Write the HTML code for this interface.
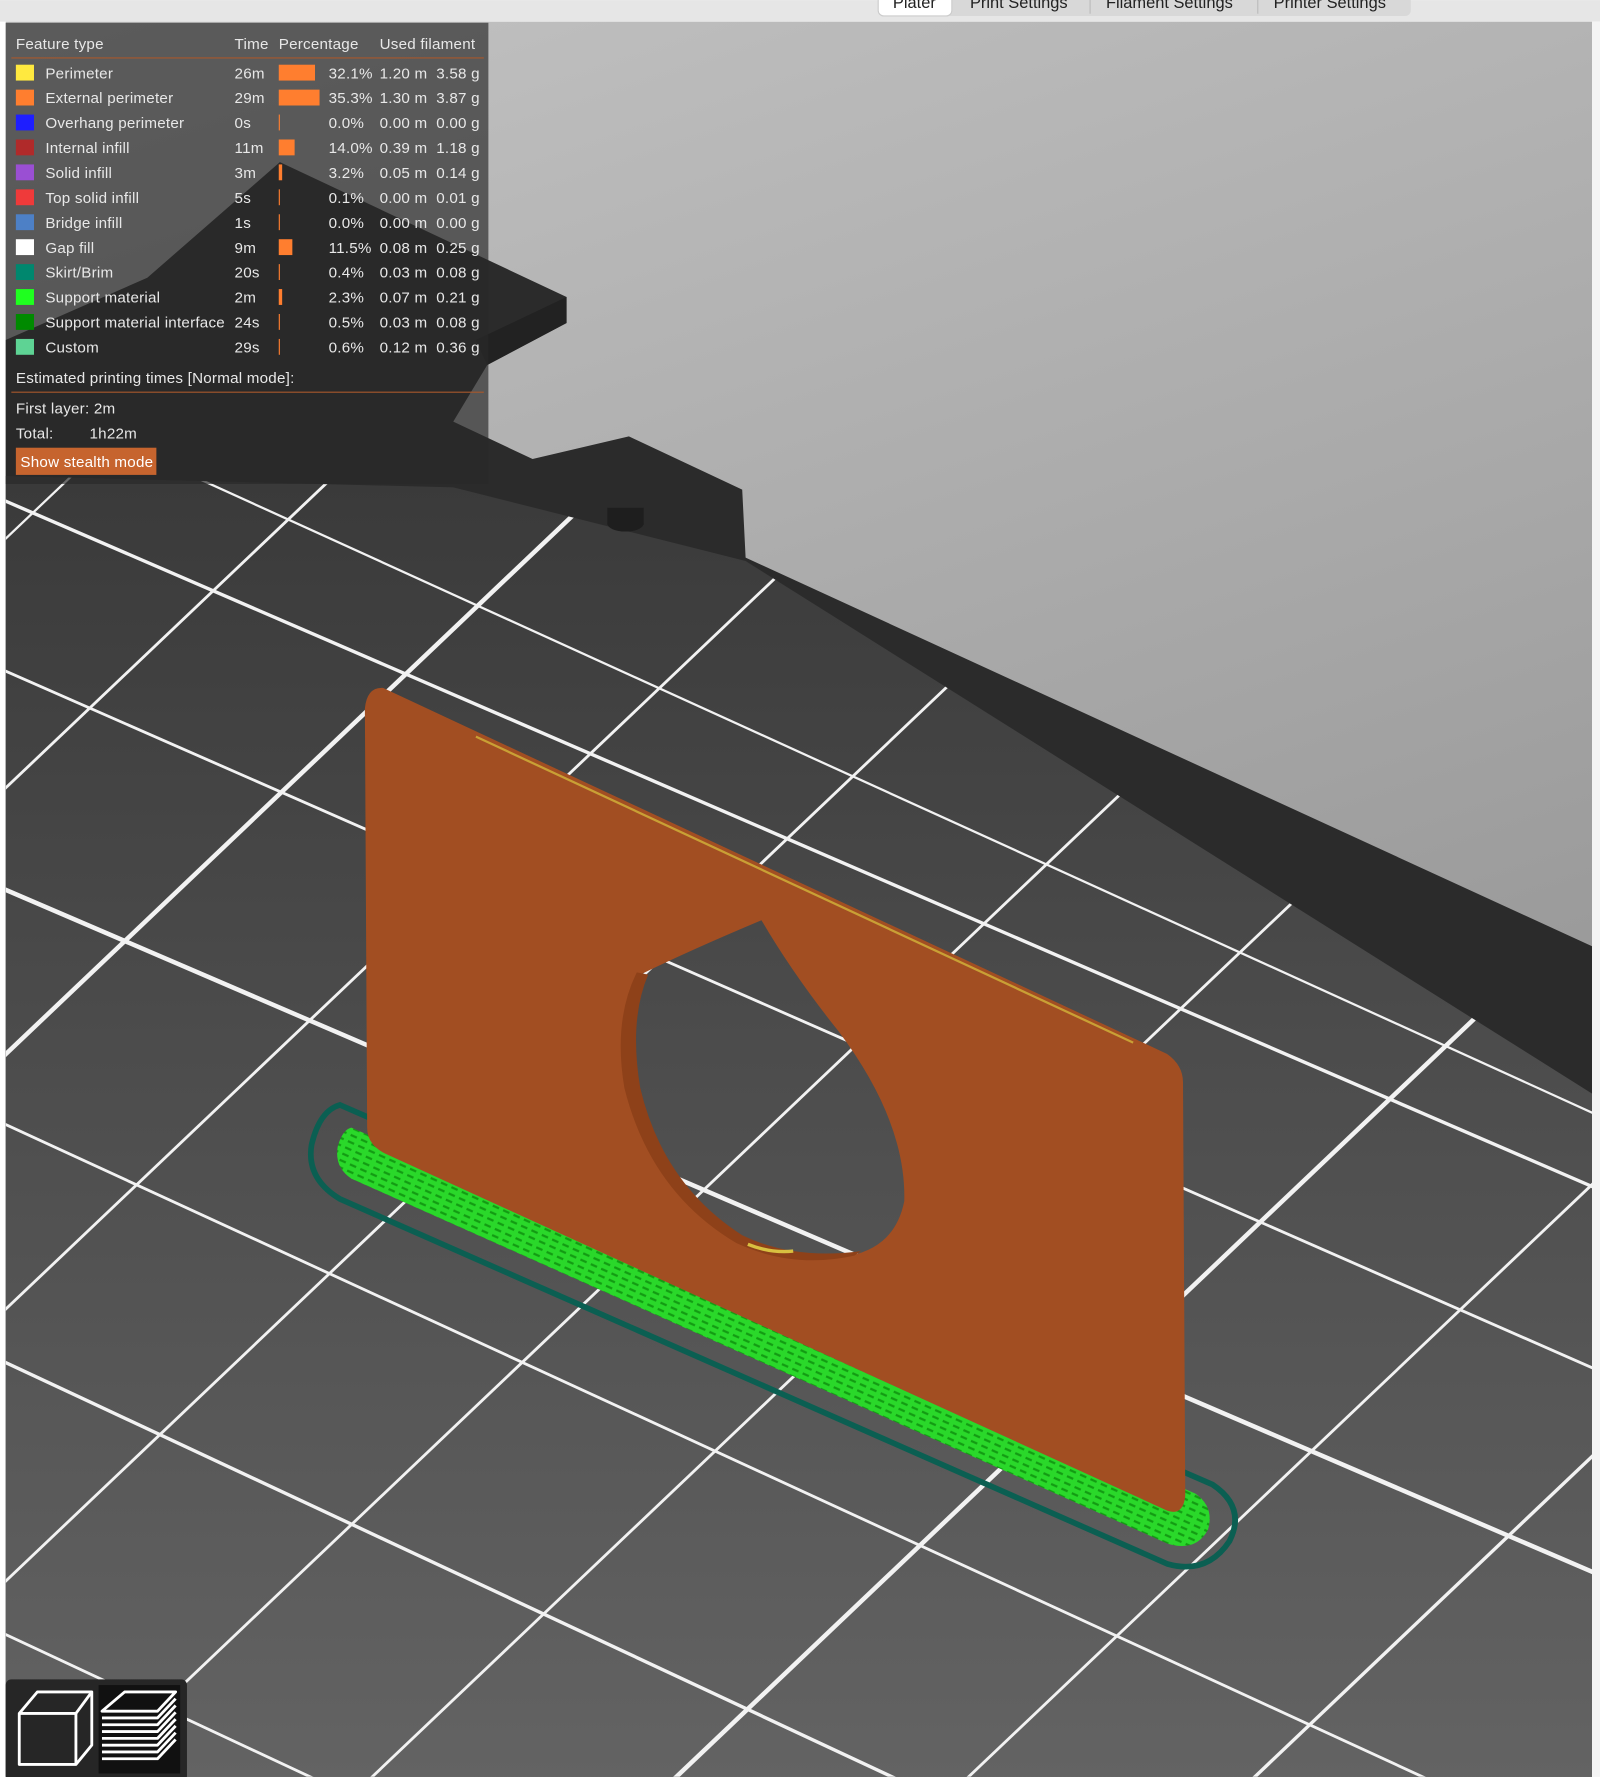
<!DOCTYPE html>
<html><head><meta charset="utf-8"><style>
html,body{margin:0;padding:0;background:#fff;width:1600px;height:1777px;overflow:hidden;}
svg{display:block;}
text{font-family:"Liberation Sans","DejaVu Sans",sans-serif;}
</style></head><body>
<svg width="1600" height="1777" viewBox="0 0 1412 1568" xmlns="http://www.w3.org/2000/svg">
<defs>
<linearGradient id="bg" x1="0" y1="0" x2="0.3" y2="1"><stop offset="0" stop-color="#c2c2c2"/><stop offset="1" stop-color="#8e8e8e"/></linearGradient>
<linearGradient id="bed" x1="0" y1="0" x2="0" y2="1"><stop offset="0" stop-color="#3a3a3a"/><stop offset="1" stop-color="#636363"/></linearGradient>
<clipPath id="view"><rect x="5" y="19" width="1400" height="1549"/></clipPath>
<clipPath id="bedc"><polygon points="5,420 400,430 658,495 1405,965 1405,1568 5,1568"/></clipPath>
<pattern id="brimp" width="10" height="6" patternUnits="userSpaceOnUse" patternTransform="rotate(24)"><rect width="10" height="6" fill="#2ad82a"/><rect x="0" y="2" width="6" height="2" fill="#139c13"/></pattern>
</defs>
<rect width="1412" height="1568" fill="#ffffff"/>
<rect x="0" y="0" width="1412" height="19" fill="#e6e6e6"/>
<g clip-path="url(#view)">
<rect x="5" y="19" width="1400" height="1549" fill="url(#bg)"/>
<polygon fill="#2b2b2b" points="5,300 130,245 247,143 500,262 500,285 430,322 400,372 470,405 555,385 655,432 658,492 1405,835 1405,1568 5,1568"/>
<polygon fill="#222" points="500,262 500,285 430,322 420,300"/>
<polygon fill="url(#bed)" points="5,420 400,430 658,495 1405,965 1405,1568 5,1568"/>
<g clip-path="url(#bedc)" stroke="#f2f2f2" fill="none">
<line x1="0" y1="440" x2="1412" y2="1050" stroke-width="3"/>
<line x1="0" y1="590" x2="1412" y2="1210" stroke-width="2.5"/>
<line x1="0" y1="783" x2="1412" y2="1390" stroke-width="4"/>
<line x1="0" y1="990" x2="1412" y2="1640" stroke-width="2.5"/>
<line x1="0" y1="1200" x2="1412" y2="1860" stroke-width="3"/>
<line x1="0" y1="1440" x2="1412" y2="2100" stroke-width="2.5"/>
<line x1="170" y1="420" x2="1412" y2="985" stroke-width="2"/>
<line x1="0" y1="480" x2="1000" y2="-470" stroke-width="2"/>
<line x1="0" y1="700" x2="1000" y2="-250" stroke-width="2.5"/>
<line x1="0" y1="935" x2="1000" y2="-15" stroke-width="4"/>
<line x1="0" y1="1160" x2="1400" y2="-170" stroke-width="2.5"/>
<line x1="0" y1="1400" x2="1500" y2="-25" stroke-width="2.5"/>
<line x1="0" y1="1640" x2="1700" y2="25" stroke-width="2.5"/>
<line x1="0" y1="1880" x2="1900" y2="75" stroke-width="2.5"/>
<line x1="0" y1="2135" x2="2100" y2="140" stroke-width="4"/>
<line x1="0" y1="2380" x2="2300" y2="195" stroke-width="2.5"/>
<line x1="0" y1="2620" x2="2500" y2="245" stroke-width="3"/>
</g>
<ellipse cx="552" cy="462" rx="16" ry="7" fill="#1e1e1e"/>
<rect x="536" y="448" width="32" height="15" fill="#1e1e1e"/>
<!-- skirt -->
<path d="M300,975 L1070,1310 Q1100,1330 1085,1360 Q1065,1390 1030,1380 L300,1058 Q270,1040 275,1010 Q282,980 300,975 Z" fill="none" stroke="#0b5f52" stroke-width="5"/>
<!-- brim -->
<path d="M310,995 L1055,1318 Q1072,1330 1066,1350 Q1055,1370 1030,1362 L310,1040 Q295,1030 298,1012 Q302,997 310,995 Z" fill="url(#brimp)"/>
<!-- plate -->
<path fill-rule="evenodd" fill="#a24e22" d="M338,607 L1030,930 Q1044,940 1044,955 L1046,1320 Q1044,1338 1030,1333 L340,1018 Q324,1010 324,995 L322,625 Q324,606 338,607 Z
M672,812 Q700,860 740,910 Q800,990 798,1060 Q790,1100 750,1108 Q690,1118 640,1085 Q575,1040 552,950 Q545,890 565,860 Q610,838 672,812 Z"/>
<path d="M562,858 Q541,900 551,960 Q574,1052 650,1097 Q700,1120 754,1108 L760,1104 Q700,1112 655,1090 Q585,1045 565,960 Q555,900 572,860 Z" fill="#8e4119"/>
<path d="M660,1098 Q680,1106 700,1104" stroke="#d8c040" stroke-width="3" fill="none"/>
<line x1="420" y1="650" x2="1000" y2="920" stroke="#c9a035" stroke-width="2"/>
</g>
<rect x="1405" y="19" width="7" height="1549" fill="#f4f4f4"/>
<!-- tabs -->
<rect x="775" y="-6" width="470" height="20" rx="5" fill="#d8d8d8"/>
<rect x="775" y="-6" width="65" height="20" rx="5" fill="#ffffff" stroke="#ccc"/>
<g font-size="14.5" fill="#222">
<text x="788" y="7">Plater</text><text x="856" y="7">Print Settings</text><text x="976" y="7">Filament Settings</text><text x="1124" y="7">Printer Settings</text>
</g>
<line x1="962" y1="-2" x2="962" y2="12" stroke="#bbb"/><line x1="1110" y1="-2" x2="1110" y2="12" stroke="#bbb"/>
<!-- legend -->
<rect x="5" y="20" width="426" height="407" fill="rgba(40,40,40,0.67)"/>
<g font-size="13.4" fill="#e8e8e8" letter-spacing="0.2">
<text x="14" y="43">Feature type</text><text x="207" y="43">Time</text><text x="246" y="43">Percentage</text><text x="335" y="43">Used filament</text>
<line x1="10" y1="51" x2="427" y2="51" stroke="#a8582c"/>
<rect x="14" y="57" width="16" height="14" fill="#ffe93f"/><text x="40" y="69">Perimeter</text><text x="207" y="69">26m</text><rect x="246" y="57" width="32" height="14" fill="#ff7e2f"/><text x="290" y="69">32.1%</text><text x="335" y="69">1.20 m</text><text x="385" y="69">3.58 g</text>
<rect x="14" y="79" width="16" height="14" fill="#ff7e2f"/><text x="40" y="91">External perimeter</text><text x="207" y="91">29m</text><rect x="246" y="79" width="36" height="14" fill="#ff7e2f"/><text x="290" y="91">35.3%</text><text x="335" y="91">1.30 m</text><text x="385" y="91">3.87 g</text>
<rect x="14" y="101" width="16" height="14" fill="#1e1eff"/><text x="40" y="113">Overhang perimeter</text><text x="207" y="113">0s</text><rect x="246" y="101" width="1" height="14" fill="#ff7e2f"/><text x="290" y="113">0.0%</text><text x="335" y="113">0.00 m</text><text x="385" y="113">0.00 g</text>
<rect x="14" y="123" width="16" height="14" fill="#b02a2a"/><text x="40" y="135">Internal infill</text><text x="207" y="135">11m</text><rect x="246" y="123" width="14" height="14" fill="#ff7e2f"/><text x="290" y="135">14.0%</text><text x="335" y="135">0.39 m</text><text x="385" y="135">1.18 g</text>
<rect x="14" y="145" width="16" height="14" fill="#9a4fd3"/><text x="40" y="157">Solid infill</text><text x="207" y="157">3m</text><rect x="246" y="145" width="3" height="14" fill="#ff7e2f"/><text x="290" y="157">3.2%</text><text x="335" y="157">0.05 m</text><text x="385" y="157">0.14 g</text>
<rect x="14" y="167" width="16" height="14" fill="#ef3a3a"/><text x="40" y="179">Top solid infill</text><text x="207" y="179">5s</text><rect x="246" y="167" width="1" height="14" fill="#ff7e2f"/><text x="290" y="179">0.1%</text><text x="335" y="179">0.00 m</text><text x="385" y="179">0.01 g</text>
<rect x="14" y="189" width="16" height="14" fill="#4d80c6"/><text x="40" y="201">Bridge infill</text><text x="207" y="201">1s</text><rect x="246" y="189" width="1" height="14" fill="#ff7e2f"/><text x="290" y="201">0.0%</text><text x="335" y="201">0.00 m</text><text x="385" y="201">0.00 g</text>
<rect x="14" y="211" width="16" height="14" fill="#ffffff"/><text x="40" y="223">Gap fill</text><text x="207" y="223">9m</text><rect x="246" y="211" width="12" height="14" fill="#ff7e2f"/><text x="290" y="223">11.5%</text><text x="335" y="223">0.08 m</text><text x="385" y="223">0.25 g</text>
<rect x="14" y="233" width="16" height="14" fill="#00876e"/><text x="40" y="245">Skirt/Brim</text><text x="207" y="245">20s</text><rect x="246" y="233" width="1" height="14" fill="#ff7e2f"/><text x="290" y="245">0.4%</text><text x="335" y="245">0.03 m</text><text x="385" y="245">0.08 g</text>
<rect x="14" y="255" width="16" height="14" fill="#1fff1f"/><text x="40" y="267">Support material</text><text x="207" y="267">2m</text><rect x="246" y="255" width="3" height="14" fill="#ff7e2f"/><text x="290" y="267">2.3%</text><text x="335" y="267">0.07 m</text><text x="385" y="267">0.21 g</text>
<rect x="14" y="277" width="16" height="14" fill="#008a00"/><text x="40" y="289">Support material interface</text><text x="207" y="289">24s</text><rect x="246" y="277" width="1" height="14" fill="#ff7e2f"/><text x="290" y="289">0.5%</text><text x="335" y="289">0.03 m</text><text x="385" y="289">0.08 g</text>
<rect x="14" y="299" width="16" height="14" fill="#5ed394"/><text x="40" y="311">Custom</text><text x="207" y="311">29s</text><rect x="246" y="299" width="1" height="14" fill="#ff7e2f"/><text x="290" y="311">0.6%</text><text x="335" y="311">0.12 m</text><text x="385" y="311">0.36 g</text>
<text x="14" y="338">Estimated printing times [Normal mode]:</text>
<line x1="10" y1="346" x2="427" y2="346" stroke="#a8582c"/>
<text x="14" y="365">First layer: 2m</text>
<text x="14" y="387">Total:</text><text x="79" y="387">1h22m</text>
<rect x="14" y="395" width="124" height="24" fill="#c6642e"/>
<text x="18" y="412" fill="#fff">Show stealth mode</text>
</g>
<!-- bottom view icons -->
<rect x="5" y="1482" width="160" height="90" rx="5" fill="#262626"/>
<rect x="87" y="1487" width="72" height="78" fill="#111"/>
<g stroke="#fff" stroke-width="2.5" fill="none" stroke-linejoin="round">
<polygon points="17,1512 33,1493 81,1493 81,1540 67,1557 17,1557"/>
<polyline points="17,1512 67,1512 81,1493"/><line x1="67" y1="1512" x2="67" y2="1557"/>
<polygon points="90,1510 110,1493 155,1493 139,1510"/>
<polyline points="90,1516 139,1516 155,1499"/>
<polyline points="90,1522 139,1522 155,1505"/>
<polyline points="90,1528 139,1528 155,1511"/>
<polyline points="90,1534 139,1534 155,1517"/>
<polyline points="90,1540 139,1540 155,1523"/>
<polyline points="90,1546 139,1546 155,1529"/>
<polyline points="90,1552 139,1552 155,1535"/>
</g>
</svg>
</body></html>
